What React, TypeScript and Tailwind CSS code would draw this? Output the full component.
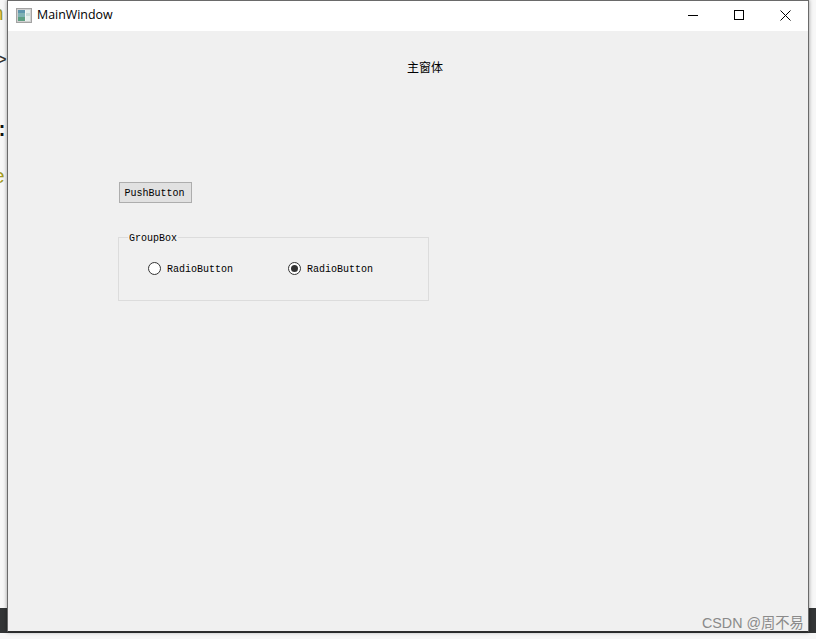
import React from 'react';

const monoFont = "font-['Liberation_Mono','Noto_Sans_CJK_SC',monospace]";

const WindowIcon = () => (
  <svg width="16" height="15" viewBox="0 0 16 15" className="shrink-0">
    <rect x="0.5" y="0.5" width="15" height="14" fill="#f4f4f4" stroke="#a3a3a3" />
    <rect x="1.5" y="1.5" width="13" height="12" fill="none" stroke="#d0d0d0" />
    <rect x="2" y="2" width="7" height="11" fill="#7fb2b4" />
    <rect x="2" y="2" width="7" height="3" fill="#5f96ad" />
    <rect x="2" y="9" width="7" height="4" fill="#5f9f83" />
    <rect x="10" y="2" width="4" height="11" fill="#e6efec" />
    <rect x="10" y="5" width="4" height="3" fill="#c9dbd8" />
  </svg>
);

const CaptionButtons = () => (
  <div className="flex items-center h-full">
    <div className="w-[46px] h-full flex items-center justify-center">
      <svg width="10" height="10" viewBox="0 0 10 10">
        <path d="M0 5.5H10" stroke="#000" strokeWidth="1" />
      </svg>
    </div>
    <div className="w-[46px] h-full flex items-center justify-center">
      <svg width="10" height="10" viewBox="0 0 10 10">
        <rect x="0.5" y="0.5" width="9" height="9" fill="none" stroke="#000" />
      </svg>
    </div>
    <div className="w-[46px] h-full flex items-center justify-center">
      <svg width="11" height="11" viewBox="0 0 11 11">
        <path d="M0.5 0.5L10.5 10.5M10.5 0.5L0.5 10.5" stroke="#000" strokeWidth="1" />
      </svg>
    </div>
  </div>
);

const Radio = ({ checked }: { checked?: boolean }) => (
  <label className="flex items-start gap-[6px] w-[140px]">
    <span className="w-[13px] h-[13px] rounded-full border border-[#333] bg-white shrink-0 flex items-center justify-center">
      {checked && <span className="w-[7px] h-[7px] rounded-full bg-[#333]" />}
    </span>
    <span className={`${monoFont} pt-[2px] text-[10px] leading-[12px] text-black`}>RadioButton</span>
  </label>
);

export default function App() {
  return (
    <div className="relative w-[816px] h-[639px] overflow-hidden bg-[#f7f7f7]">
      {/* desktop behind the window */}
      <div className="absolute left-0 right-0 top-[608px] h-[25px] bg-[#333536]" />
      <span className="absolute left-[-8px] top-[3px] font-['Liberation_Mono',monospace] text-[20px] leading-[24px] text-[#a39a1e]">n</span>
      <span className="absolute left-[-5px] top-[49px] font-['Liberation_Mono',monospace] text-[20px] leading-[24px] text-[#333]">&gt;</span>
      <span className="absolute left-[-4px] top-[119px] font-['Liberation_Mono',monospace] font-bold text-[20px] leading-[24px] text-[#111]">:</span>
      <span className="absolute left-[-7px] top-[166px] font-['Liberation_Mono',monospace] text-[20px] leading-[24px] text-[#a39a1e]">e</span>

      {/* window */}
      <div className="absolute left-[7px] top-0 w-[802px] h-[632px] border border-[#6a6a6a] border-b-[#2e2e2e] shadow-[0_0_4px_rgba(0,0,0,0.4)] flex flex-col bg-[#f0f0f0]">
        <div className="h-[30px] pb-[2px] bg-white flex items-center justify-between shrink-0">
          <div className="flex items-center gap-[5px] pl-[8px]">
            <WindowIcon />
            <span className="font-['Open_Sans',sans-serif] text-[12.4px] leading-[16px] text-black">MainWindow</span>
          </div>
          <CaptionButtons />
        </div>

        <div className="flex-1 flex flex-col pl-[110px]">
          <div className="mt-[29px] ml-[289px] h-[14px] font-['Noto_Sans_CJK_SC',sans-serif] text-[12px] leading-[14px] text-black">
            主窗体
          </div>
          <button className={`mt-[108px] ml-px w-[73px] h-[21px] pt-[2px] pr-[2px] border border-[#adadad] bg-[#e1e1e1] ${monoFont} text-[10px] leading-[12px] text-black`}>
            PushButton
          </button>
          <fieldset className="mt-[26px] w-[311px] h-[72px] border border-[#dcdcdc] pl-[9px] m-0">
            <legend className={`h-[16px] pt-[4px] px-[1px] ${monoFont} text-[10px] leading-[12px] text-black`}>GroupBox</legend>
            <div className="flex pl-[20px] pt-[17px]">
              <Radio />
              <Radio checked />
            </div>
          </fieldset>
        </div>
      </div>

      {/* watermark */}
      <span className="absolute left-[702px] top-[614px] font-['Liberation_Sans','Noto_Sans_CJK_SC',sans-serif] text-[14.3px] leading-[18px] text-[#8a8a8a]">
        CSDN @周不易
      </span>
    </div>
  );
}
